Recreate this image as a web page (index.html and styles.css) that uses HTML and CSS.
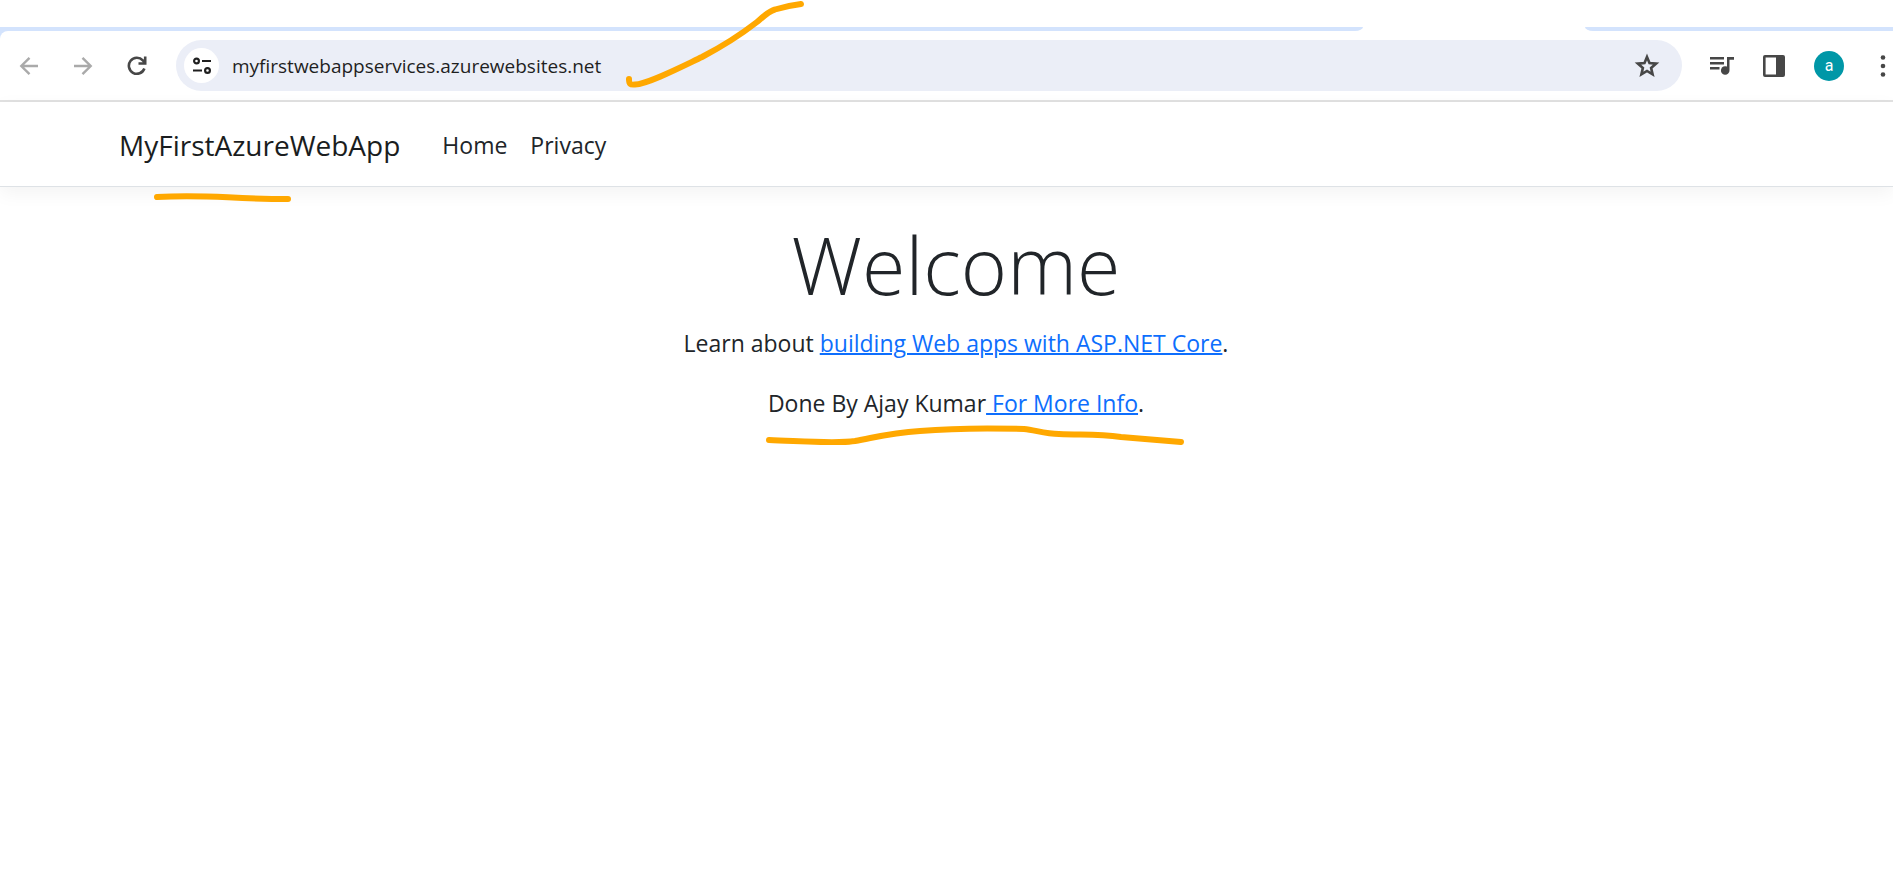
FILE: index.html
```html
<!DOCTYPE html>
<html lang="en">
<head>
<meta charset="utf-8">
<title>Home page - MyFirstAzureWebApp</title>
<link rel="stylesheet" href="styles.css">
</head>
<body>
<div class="tabstrip">
  <div class="tabstrip-left"></div>
  <div class="tab-active"></div>
  <div class="tabstrip-right"></div>
</div>
<div class="toolbar-frame">
  <div class="toolbar">
    <div class="nav-buttons">
      <button class="icon-button" aria-label="Back" disabled>
        <svg width="20" height="20" viewBox="0 0 20 20" fill="none" stroke="#aaa" stroke-width="2.4"><path d="M19 10H2.5M10.5 1.8L2.3 10l8.2 8.2"/></svg>
      </button>
      <button class="icon-button" aria-label="Forward" disabled>
        <svg width="20" height="20" viewBox="0 0 20 20" fill="none" stroke="#aaa" stroke-width="2.4"><path d="M1 10h16.5M9.500 1.8L17.700 10l-8.2 8.2"/></svg>
      </button>
      <button class="icon-button" aria-label="Reload">
        <svg width="20" height="20" viewBox="0 0 20 20" fill="none" stroke="#474747" stroke-width="2.6"><path d="M17.400 12.500A8 8 0 1 1 15.800 4.400L18 6.800M18.200 0.500V7.500H11.500"/></svg>
      </button>
    </div>
    <div class="address">
      <button class="site-info" aria-label="View site information">
        <svg width="20" height="18" viewBox="0 0 20 18" fill="none" stroke="#1f1f1f" stroke-width="2.2"><circle cx="4.500" cy="4" r="2.400"/><path d="M10 4h9M1 13.500h9"/><circle cx="15.500" cy="13.500" r="2.400"/></svg>
      </button>
      <span class="url">myfirstwebappservices.azurewebsites.net
        <svg class="ink ink-check" width="184" height="92" viewBox="0 0 184 92"><path d="M6 79C6 84 7 85 12 84.500C25 84 58 67 79 57C100 46 116 36 134 22C141 16 146 11 152 9.500C160 7 170 5 178 4"/></svg>
      </span>
      <button class="icon-button bookmark" aria-label="Bookmark this tab">
        <svg width="26" height="26" viewBox="0 0 26 26" fill="none" stroke="#474747" stroke-width="2.6" stroke-linejoin="miter"><path d="M13 4L15.500 10.100 22.100 10.600 17.100 14.900 18.600 21.400 13 18 7.400 21.400 8.900 14.900 3.900 10.600 10.500 10.100Z"/></svg>
      </button>
    </div>
    <div class="tool-buttons">
      <button class="icon-button" aria-label="Media control">
        <svg width="24" height="20" viewBox="0 0 24 20"><path fill="#474747" d="M0 1h14v2.400H0zM0 6h14v2.400H0zM0 11h9.500v2.400H0zM17 1h7v2.800h-4.500V14.200A4.300 4.300 0 1 1 17 10.600z"/></svg>
      </button>
      <button class="icon-button" aria-label="Side panel">
        <svg width="22" height="22" viewBox="0 0 22 22"><path fill="#474747" fill-rule="evenodd" d="M2 0H20Q22 0 22 2V20Q22 22 20 22H2Q0 22 0 20V2Q0 0 2 0ZM2.600 2.600V19.400H13V2.600Z"/></svg>
      </button>
      <button class="avatar" aria-label="Profile">a</button>
      <button class="icon-button menu" aria-label="Menu">
        <svg width="6" height="22" viewBox="0 0 6 22" fill="#474747"><circle cx="3" cy="2.500" r="2.300"/><circle cx="3" cy="11" r="2.300"/><circle cx="3" cy="19.500" r="2.300"/></svg>
      </button>
    </div>
  </div>
</div>
<header class="site-header">
  <nav class="site-nav">
    <a class="brand" href="#">MyFirstAzureWebApp
      <svg class="ink ink-brand" width="142" height="14" viewBox="0 0 142 14"><path d="M4 6C55 3 75 8 135 8"/></svg>
    </a>
    <a class="nav-link" href="#">Home</a>
    <a class="nav-link" href="#">Privacy</a>
  </nav>
</header>
<main class="content">
  <h1 class="title">Welcome</h1>
  <p class="lead">Learn about <a class="link" href="#">building Web apps with ASP.NET Core</a>.</p>
  <p class="lead credit">Done By Ajay Kumar<a class="link" href="#"> For More Info</a>.
    <svg class="ink ink-credit" width="420" height="26" viewBox="0 0 420 26"><path d="M4 15C35 16 70 19 90 16C112 12 125 8 155 6C190 3 225 3 259 4C270 5 280 9 294 9C320 10 333 9 356 12L416 17"/></svg>
  </p>
</main>
</body>
</html>
```
FILE: styles.css
```css
* {
  box-sizing: border-box;
}

body {
  margin: 0;
  background: #fff;
  color: #212529;
  font-family: "Open Sans", "Noto Sans", sans-serif;
  font-size: 23px;
  overflow-x: hidden;
}

button {
  border: 0;
  padding: 0;
  background: none;
  font-family: inherit;
}

svg {
  display: block;
}

/* Browser chrome */
.tabstrip {
  display: flex;
  padding-top: 27px;
}

.tabstrip-left,
.tabstrip-right {
  height: 4px;
  background: #d3e3fd;
}

.tabstrip-left {
  flex: 1363;
  border-bottom-right-radius: 8px 4px;
}

.tab-active {
  flex: 222;
}

.tabstrip-right {
  flex: 308;
  border-bottom-left-radius: 8px 4px;
}

.toolbar-frame {
  background: linear-gradient(#d3e3fd 8px, #fff 8px);
}

.toolbar {
  display: flex;
  align-items: center;
  padding: 9px 7px 9px 19px;
  background: #fff;
  border-bottom: 2px solid #e1e1e1;
  border-top-left-radius: 8px;
}

.nav-buttons {
  display: flex;
  gap: 34px;
  margin-right: 29px;
}

.icon-button {
  display: flex;
  align-items: center;
  justify-content: center;
}

.address {
  flex: 1;
  display: flex;
  align-items: center;
  height: 51px;
  padding: 0 22px 0 8px;
  border-radius: 26px;
  background: #ebeef7;
}

.site-info {
  display: flex;
  align-items: center;
  justify-content: center;
  width: 35px;
  height: 35px;
  border-radius: 50%;
  background: #fff;
}

.url {
  position: relative;
  margin-left: 13px;
  color: #1f1f1f;
  font-size: 19px;
  line-height: 28px;
}

.bookmark {
  margin-left: auto;
}

.tool-buttons {
  display: flex;
  align-items: center;
  margin-left: 28px;
  gap: 29px;
}

.avatar {
  width: 30px;
  height: 30px;
  border-radius: 50%;
  background: #0097a7;
  color: #fff;
  font-family: Roboto, sans-serif;
  font-size: 16px;
  line-height: 28px;
}

.menu {
  margin-left: 7px;
}

/* Site */
.site-header {
  border-bottom: 1px solid #dee2e6;
  box-shadow: 0 6px 18px rgba(0, 0, 0, 0.05);
}

.site-nav {
  display: flex;
  align-items: center;
  height: 84px;
  padding: 2px 119px 0;
}

.brand {
  position: relative;
  margin-right: 42px;
  color: #1a1d20;
  font-size: 28px;
  line-height: 44px;
  text-decoration: none;
}

.nav-link {
  margin-right: 23px;
  color: #212529;
  line-height: 36px;
  text-decoration: none;
}

.content {
  padding: 28px 0 0 19px;
  text-align: center;
}

.title {
  margin: 0 0 10px;
  font-size: 79px;
  font-weight: 300;
  line-height: 100px;
}

.lead {
  margin: 0 0 24px;
  line-height: 36px;
}

.credit {
  position: relative;
}

.link {
  color: #0d6efd;
  text-decoration: underline;
  text-decoration-thickness: 2px;
}

/* Hand-drawn marker strokes */
.ink {
  position: absolute;
  overflow: visible;
  fill: none;
  stroke: #ffa800;
  stroke-width: 6px;
  stroke-linecap: round;
  stroke-linejoin: round;
  pointer-events: none;
}

.ink-check {
  left: 391px;
  top: -52px;
}

.ink-brand {
  left: 34px;
  top: 68px;
}

.ink-credit {
  left: calc(50% - 191px);
  top: 40px;
}
```
